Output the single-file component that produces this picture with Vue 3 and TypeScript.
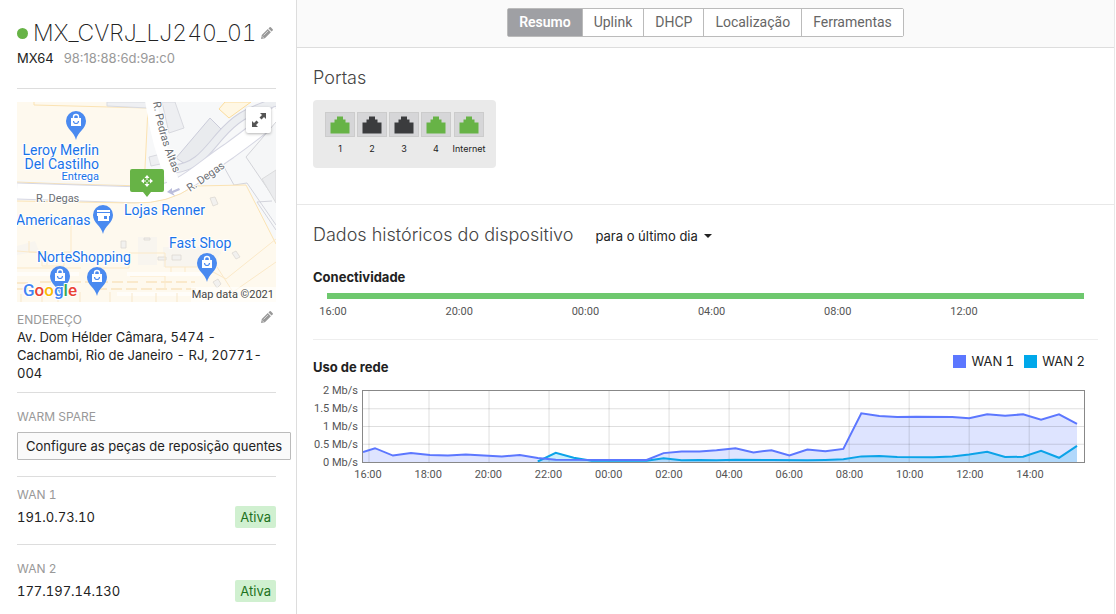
<script setup lang="ts">
interface Port {
  label: string
  up: boolean
}

interface Tick {
  label: string
  at: number
}

interface Uplink {
  name: string
  address: string
}

type Point = [number, number]

const tabs: string[] = ['Resumo', 'Uplink', 'DHCP', 'Localização', 'Ferramentas']
const activeTab = 'Resumo'

const ports: Port[] = [
  { label: '1', up: true },
  { label: '2', up: false },
  { label: '3', up: false },
  { label: '4', up: true },
  { label: 'Internet', up: true },
]

const uplinks: Uplink[] = [
  { name: 'WAN 1', address: '191.0.73.10' },
  { name: 'WAN 2', address: '177.197.14.130' },
]

const barWidth = 757
const barTicks: Tick[] = ['16:00', '20:00', '00:00', '04:00', '08:00', '12:00'].map((label, i) => ({
  label,
  at: 6 + i * 126.2,
}))

const plotWidth = 722
const plotHeight = 72
const plotTicks: Tick[] = [
  '16:00', '18:00', '20:00', '22:00', '00:00', '02:00',
  '04:00', '06:00', '08:00', '10:00', '12:00', '14:00',
].map((label, i) => ({ label, at: 6 + i * 60.1 }))

const levels: string[] = ['2 Mb/s', '1.5 Mb/s', '1 Mb/s', '0.5 Mb/s', '0 Mb/s']

const wan1: Point[] = [
  [0, 62], [12, 58], [30, 65.5], [48, 63], [67, 65], [85, 65.5], [103, 64.5], [139, 66.3],
  [157, 65], [175, 68], [193, 69.7], [284, 70], [301, 63], [319, 61.3], [337, 61.3],
  [354, 60], [373, 58], [391, 62.3], [409, 60], [427, 65.3], [445, 59.3], [463, 61],
  [481, 58.7], [499, 22.7], [517, 25.3], [535, 26.3], [554, 26], [590, 26.3], [607, 27.7],
  [625, 23.7], [643, 25], [661, 23.7], [679, 29], [697, 23.7], [715, 33.3],
]

const wan2: Point[] = [
  [175, 71.5], [193, 62.7], [211, 67.7], [229, 70.7], [284, 70.7], [301, 68.3], [319, 70.3],
  [337, 70], [354, 70.3], [373, 69.7], [409, 70], [445, 70.3], [463, 70], [481, 69.3],
  [499, 66.3], [517, 66], [535, 67], [571, 67.3], [590, 66.3], [607, 64.3], [625, 61.7],
  [643, 67], [661, 66.7], [679, 60.7], [697, 67.7], [715, 55.7],
]

const line = (points: Point[]): string => points.map((p) => p.join(',')).join(' ')

const area = (points: Point[]): string => {
  const first = points[0][0]
  const last = points[points.length - 1][0]
  return `${first},${plotHeight} ${line(points)} ${last},${plotHeight}`
}

const percent = (value: number, total: number): string => `${(value / total) * 100}%`
</script>

<template>
  <div class="page">
    <aside class="sidebar">
      <header class="device">
        <div class="device-title">
          <span class="status"></span>
          <h1>MX_CVRJ_LJ240_01</h1>
          <button class="edit" type="button" aria-label="Editar nome">
            <svg width="12" height="12" viewBox="0 0 12 12">
              <path fill="#999" d="M0 12l.8-3.900 6-6 3.100 3.100-6 6zM7.500 1.400L8.600.3q.6-.5 1.200 0l1.900 1.900q.5.6 0 1.200l-1.100 1.100z" />
              <path stroke="#fff" stroke-width=".6" fill="none" d="M2.600 8.400l4.500-4.500M1 9.300L2.700 11" />
            </svg>
          </button>
        </div>
        <p class="model"><span>MX64</span><span class="mac">98:18:88:6d:9a:c0</span></p>
      </header>

      <section class="block location">
        <div class="map">
          <svg class="map-art" viewBox="0 0 259 200" role="img" aria-label="Mapa">
            <defs>
              <g id="pin">
                <path d="M0 19C-1.500 11-10 8-10 0a10 10 0 0 1 20 0C10 8 1.500 11 0 19z" fill="#4a8af0" />
              </g>
              <g id="bag-pin">
                <use href="#pin" />
                <path d="M-5-3H5V5H-5z" fill="#fff" />
                <path d="M-2.500-3v-1a2.500 2.500 0 0 1 5 0v1" fill="none" stroke="#fff" stroke-width="1.400" />
                <path d="M-2.500 0a2.500 2.500 0 0 0 5 0" fill="none" stroke="#4a8af0" stroke-width="1.200" />
              </g>
              <path id="pedras" d="M136 0Q143 43 160 77" />
            </defs>
            <rect width="259" height="200" fill="#f7f8f9" />
            <path d="M0 0H132L128 83 0 78z" fill="#fef9ee" />
            <path d="M17 0V3L131 6 127 86M0 80L50 82 127 84" fill="none" stroke="#fbe3b3" />
            <path d="M90 0H131V6L90 4z" fill="#eff0f3" stroke="#d9dbe2" />
            <path d="M145 0H158L167 26 152 31z" fill="#eeeff2" stroke="#d8d9df" />
            <path d="M159 56L193 16 205 28 171 64z" fill="#e9ebee" stroke="#cbccda" />
            <path d="M132 55L148 51V61L134 64z" fill="#eeeff2" stroke="#d8d9df" />
            <path d="M208 0L202 7 212 16 234 0z" fill="#fff7e4" stroke="#fbdc9b" />
            <path d="M262-1C227 10 217 18 203 34S180 65 157 67" fill="none" stroke="#cfd0dd" stroke-width="9" />
            <path d="M262-1C227 10 217 18 203 34S180 65 157 67" fill="none" stroke="#eceef1" stroke-width="7" />
            <path d="M0 89Q60 91 125 93C165 92 181 69 212 49Q234 33 262 11" fill="none" stroke="#d6d7e3" stroke-width="17" />
            <path d="M0 89Q60 91 125 93C165 92 181 69 212 49Q234 33 262 11" fill="none" stroke="#fff" stroke-width="15" />
            <path d="M134-2Q140 43 157 82" fill="none" stroke="#fff" stroke-width="12" />
            <path d="M210 64L259 134V60L230 53z" fill="#f7f8f9" />
            <path d="M259 20L229 55 259 99" fill="#f5f6f7" stroke="#d2d3d8" />
            <path d="M259 68L245 77 259 101z" fill="#ebecee" stroke="#dadbdc" />
            <path d="M207 65L217 83 230 81 259 123" fill="none" stroke="#d3d4dc" />
            <path d="M0 99L117 101Q151 102 177 84L229 83 259 142V200H0z" fill="#fef9ee" />
            <path d="M0 99L117 101Q151 102 177 84L229 83 259 142" fill="none" stroke="#fbe3b3" />
            <path d="M255 99L240 100 259 128" fill="none" stroke="#d3d4dc" />
            <path d="M0 144L18 139 22 149 0 153zM121 135H140V163H121zM146 145H176Q190 145 196 138L204 151 194 165H146z" fill="#f8f5ef" />
            <path d="M104 139h5v7h-5zM141 155h8v3h-8zM155 153h9v5h-9zM127 136h6v2h-6zM193 96l3 8 5-2-3-7zM215 151l4-2 4 6-4 2zM196 180l5-3 3 5-4 4z" fill="#f2f1ef" stroke="#ddd9d3" stroke-width=".8" />
            <path d="M0 149L25 151V164H47V150H54V118M0 166H64M82 166H112V151H148V165H187L209 177 259 137M113 174H148V188M12 139V150H30V163M154 165V174M168 165V174M185 165L192 177M200 165L216 190 259 160" fill="none" stroke="#fbe9c8" />
            <path d="M0 181H14M23 180H74M80 180H123M129 180H178M0 187H60M79 187H179" fill="none" stroke="#fae9cb" stroke-width="2" stroke-dasharray="11 4" />
            <path d="M0 172H62M110 172H185M100 192H194" fill="none" stroke="#fffdf9" stroke-width="4" />
            <path d="M4 192V200M25 191V200M41 191V200M63 190V200M93 190V200M115 191V200M139 191V200M160 191V200" stroke="#f7e7ca" />
            <path d="M150 90L155 86 155 89 162 86 163 88 156 91 158 94z" fill="#bbbddb" />

            <g class="road">
              <text x="19" y="100">R. Degas</text>
              <text transform="translate(173 90) rotate(-35)">R. Degas</text>
              <text><textPath href="#pedras">R. Pedras Altas</textPath></text>
            </g>
            <use href="#bag-pin" x="59" y="19" />
            <use href="#pin" x="86" y="113" />
            <path d="M80 108H93V110H80zM80 111H93V114H92V119H81V114H80zM87 114V117H90V114z" fill="#fff" fill-rule="evenodd" />
            <use href="#bag-pin" x="190" y="161" />
            <use href="#bag-pin" x="43" y="174" />
            <use href="#bag-pin" x="80" y="175" />
            <g class="place">
              <text x="82" y="53" text-anchor="end">Leroy Merlin</text>
              <text x="82" y="67" text-anchor="end">Del Castilho</text>
              <text class="note" x="82" y="78" text-anchor="end">Entrega</text>
              <text x="-1" y="123">Americanas</text>
              <text x="107" y="113">Lojas Renner</text>
              <text x="20" y="160">NorteShopping</text>
              <text x="152" y="146">Fast Shop</text>
            </g>
            <path d="M115 67H145Q147 67 147 69V88Q147 90 145 90H134L130 95 126 90H115Q113 90 113 88V69Q113 67 115 67z" fill="#67b346" />
            <path d="M130 73l2.500 3h-5zM130 85l2.500-3h-5zM124 79l3-2.500v5zM136 79l-3-2.500v5z" fill="#fff" />
            <path d="M130 76v2M130 80v2M127 79h2M131 79h2" stroke="#fff" />
            <text class="google" x="6" y="194"><tspan fill="#4285f4">G</tspan><tspan fill="#ea4335">o</tspan><tspan fill="#fbbc05">o</tspan><tspan fill="#4285f4">g</tspan><tspan fill="#34a853">l</tspan><tspan fill="#ea4335">e</tspan></text>
            <rect x="174" y="185" width="85" height="15" fill="#fff" fill-opacity=".6" />
            <text class="credit" x="257" y="196" text-anchor="end">Map data ©2021</text>
          </svg>
          <button class="expand" type="button" aria-label="Ampliar mapa">
            <svg width="14" height="14" viewBox="0 0 14 14">
              <path fill="#555" d="M8 0H14V6L12 4 9.500 6.500 7.500 4.500 10 2zM6 14H0V8L2 10 4.500 7.500 6.500 9.500 4 12z" />
            </svg>
          </button>
        </div>
        <div class="label-row">
          <h2 class="caption">ENDEREÇO</h2>
          <button class="edit" type="button" aria-label="Editar endereço">
            <svg width="12" height="12" viewBox="0 0 12 12">
              <path fill="#999" d="M0 12l.8-3.900 6-6 3.100 3.100-6 6zM7.500 1.400L8.600.3q.6-.5 1.200 0l1.900 1.900q.5.6 0 1.200l-1.100 1.100z" />
              <path stroke="#fff" stroke-width=".6" fill="none" d="M2.600 8.400l4.500-4.500M1 9.300L2.700 11" />
            </svg>
          </button>
        </div>
        <address>Av. Dom Hélder Câmara, 5474 - Cachambi, Rio de Janeiro - RJ, 20771-004</address>
      </section>

      <section class="block spare">
        <h2 class="caption">WARM SPARE</h2>
        <button class="configure" type="button">Configure as peças de reposição quentes</button>
      </section>

      <section v-for="uplink in uplinks" :key="uplink.name" class="block uplink">
        <h2 class="caption">{{ uplink.name }}</h2>
        <div class="uplink-row">
          <span>{{ uplink.address }}</span>
          <span class="badge">Ativa</span>
        </div>
      </section>
    </aside>

    <main class="main">
      <nav class="topbar">
        <div class="tabs">
          <button
            v-for="tab in tabs"
            :key="tab"
            type="button"
            class="tab"
            :class="{ active: tab === activeTab }"
          >{{ tab }}</button>
        </div>
      </nav>

      <section class="ports">
        <h2 class="heading">Portas</h2>
        <ul class="port-panel">
          <li v-for="port in ports" :key="port.label">
            <span class="jack">
              <svg width="20" height="18" viewBox="0 0 20 18">
                <path :class="port.up ? 'up' : 'down'" d="M.5 17.500V6.500H4.500V3.500H7V.5H13V3.500H15.500V6.500H19.500V17.500z" />
              </svg>
            </span>
            <span class="port-label">{{ port.label }}</span>
          </li>
        </ul>
      </section>

      <section class="history">
        <div class="history-title">
          <h2 class="heading">Dados históricos do dispositivo</h2>
          <button class="period" type="button">para o último dia<span class="caret"></span></button>
        </div>

        <div class="connectivity">
          <h3>Conectividade</h3>
          <div class="bar"></div>
          <svg class="ticks">
            <text v-for="tick in barTicks" :key="tick.label" :x="percent(tick.at, barWidth)" y="16">{{ tick.label }}</text>
          </svg>
        </div>

        <div class="usage">
          <div class="usage-head">
            <h3>Uso de rede</h3>
            <ul class="legend">
              <li><span class="swatch first"></span>WAN 1</li>
              <li><span class="swatch second"></span>WAN 2</li>
            </ul>
          </div>
          <div class="chart">
            <div class="levels">
              <span v-for="level in levels" :key="level">{{ level }}</span>
            </div>
            <div class="plot-column">
              <svg class="plot" :viewBox="`0 0 ${plotWidth} ${plotHeight}`" preserveAspectRatio="none">
                <polygon :points="area(wan1)" fill="#5c77ff" fill-opacity=".2" />
                <polygon :points="area(wan2)" fill="#00a8ea" fill-opacity=".2" />
                <g class="grid">
                  <line v-for="tick in plotTicks" :key="tick.label" :x1="tick.at" :x2="tick.at" y1="0" :y2="plotHeight" />
                  <line v-for="n in 3" :key="n" x1="0" :x2="plotWidth" :y1="n * 18" :y2="n * 18" />
                </g>
                <polyline :points="line(wan2)" stroke="#0ba3e8" />
                <polyline :points="line(wan1)" stroke="#5c77ff" />
              </svg>
              <svg class="ticks">
                <text v-for="tick in plotTicks" :key="tick.label" :x="percent(tick.at, plotWidth)" y="15">{{ tick.label }}</text>
              </svg>
            </div>
          </div>
        </div>
      </section>
    </main>
  </div>
</template>

<style>
body {
  margin: 0;
  background: #fff;
}
</style>

<style scoped>
.page {
  display: flex;
  min-height: 100vh;
  box-sizing: border-box;
  font-family: Inter, "Liberation Sans", sans-serif;
  font-size: 13px;
  line-height: 18px;
  color: #222;
}

h1,
h2,
h3,
p,
ul {
  margin: 0;
  padding: 0;
  font-weight: 400;
}

ul {
  list-style: none;
}

button {
  font-family: inherit;
  cursor: pointer;
}

.sidebar {
  flex: 0 0 297px;
  min-width: 0;
  box-sizing: border-box;
  padding: 0 20px 0 17px;
  border-right: 1px solid #ddd;
  font-variant-numeric: tabular-nums;
}

.device {
  padding: 17px 0 21px;
}

.device-title {
  display: flex;
  align-items: center;
}

.status {
  width: 11px;
  height: 11px;
  margin-right: 5px;
  border-radius: 50%;
  background: #67b346;
}

h1 {
  flex: 1;
  font-size: 23px;
  line-height: 32px;
  font-weight: 200;
  white-space: nowrap;
}

.edit {
  display: flex;
  padding: 0;
  margin-right: 3px;
  border: 0;
  background: none;
}

.model {
  display: flex;
  gap: 10px;
  font-variant-numeric: normal;
}

.model .mac {
  color: #999;
}

.block {
  border-top: 1px solid #ddd;
}

.location {
  padding: 13px 0 10px;
}

.map {
  position: relative;
}

.map-art {
  display: block;
  width: 100%;
  font-family: Roboto, sans-serif;
}

.map-art text {
  paint-order: stroke;
  stroke: #fff;
  stroke-width: 2px;
  stroke-linejoin: round;
}

.map-art .place {
  font-size: 14px;
  fill: #1a73e8;
}

.map-art .note {
  font-size: 11px;
}

.map-art .road {
  font-size: 11px;
  fill: #6b6e73;
}

.map-art .google {
  font-size: 17px;
  font-weight: 500;
}

.map-art .credit {
  font-size: 11px;
  fill: #444;
  stroke: none;
}

.expand {
  position: absolute;
  top: 5px;
  right: 5px;
  display: grid;
  place-items: center;
  width: 25px;
  height: 26px;
  padding: 0;
  border: 0;
  border-radius: 2px;
  background: #fff;
  box-shadow: 0 1px 3px rgba(0, 0, 0, .3);
}

.label-row {
  display: flex;
  align-items: flex-start;
  justify-content: space-between;
  padding-top: 9px;
}

.caption {
  font-size: 12px;
  line-height: 17px;
  color: #999;
}

address {
  font-style: normal;
}

.spare {
  padding: 15px 0 16px;
}

.configure {
  display: block;
  height: 28px;
  margin-top: 7px;
  padding: 0 8px;
  border: 1px solid #bbb;
  border-radius: 1px;
  background: #fafafa;
  font-size: 13px;
  color: #222;
  white-space: nowrap;
}

.uplink {
  padding: 9px 0 16px;
}

.uplink + .uplink {
  padding-top: 15px;
}

.uplink-row {
  display: flex;
  align-items: center;
  justify-content: space-between;
  margin-top: 3px;
}

.badge {
  padding: 2px 5px;
  border-radius: 2px;
  background: #d0f0d0;
  color: #1d721d;
}

.main {
  flex: 1;
  min-width: 0;
  margin-right: 1px;
  border-right: 1px solid #e8e8e8;
}

.topbar {
  display: flex;
  justify-content: center;
  padding: 8px 0 10px;
  border-bottom: 1px solid #ddd;
  background: #fafafa;
}

.tabs {
  display: flex;
  border: 1px solid #bbb;
  border-radius: 2px;
  background: #fff;
}

.tab {
  padding: 0 11px;
  border: 0;
  border-right: 1px solid #bbb;
  background: #fff;
  font-family: Roboto, sans-serif;
  font-size: 14px;
  line-height: 27px;
  color: #666;
}

.tab:last-child {
  border-right: 0;
}

.tab.active {
  background: #9fa0a4;
  font-weight: 600;
  color: #fff;
}

.heading {
  font-size: 18px;
  line-height: 24px;
  font-weight: 300;
  color: #444;
}

.ports {
  padding: 18px 16px 36px;
  border-bottom: 1px solid #e8e8e8;
}

.port-panel {
  display: flex;
  gap: 2px;
  width: fit-content;
  height: 68px;
  margin-top: 10px;
  padding: 12px 12px 0;
  box-sizing: border-box;
  border-radius: 4px;
  background: #eaeaea;
}

.port-panel li {
  display: flex;
  flex-direction: column;
  align-items: center;
  width: 30px;
}

.port-panel li:last-child {
  margin-left: 1px;
}

.jack {
  display: grid;
  place-items: center;
  width: 28px;
  height: 23px;
  border: 1px solid #ccc;
  background: #d6d6d8;
}

.jack .up {
  fill: #67b346;
}

.jack .down {
  fill: #3b3c3e;
}

.port-label {
  margin-top: 3px;
  font-size: 9px;
  white-space: nowrap;
}

.history {
  padding: 18px 16px;
}

.history-title {
  display: flex;
  align-items: center;
  gap: 22px;
}

.period {
  display: flex;
  align-items: center;
  gap: 6px;
  padding: 2px 0 0;
  border: 0;
  background: none;
  font-size: 13px;
  color: #222;
}

.caret {
  border: 4px solid transparent;
  border-top-color: #222;
  border-bottom: 0;
}

h3 {
  font-size: 13px;
  line-height: 18px;
  font-weight: 700;
}

.connectivity {
  padding: 21px 14px 16px 0;
  border-bottom: 1px solid #eee;
}

.bar {
  height: 6px;
  margin: 7px 0 0 14px;
  background: #6ec86e;
}

.ticks {
  display: block;
  width: 100%;
  height: 24px;
  overflow: visible;
  font-family: Roboto, sans-serif;
  font-size: 11px;
  text-anchor: middle;
  fill: #555;
}

.connectivity .ticks {
  width: calc(100% - 14px);
  margin-left: 14px;
}

.usage {
  padding: 12px 13px 0 0;
}

.usage-head {
  display: flex;
  align-items: flex-start;
  justify-content: space-between;
}

.usage-head h3 {
  margin-top: 6px;
}

.legend {
  display: flex;
  gap: 10px;
  font-variant-numeric: tabular-nums;
}

.legend li {
  display: flex;
  align-items: center;
  gap: 5px;
}

.swatch {
  width: 13px;
  height: 13px;
}

.swatch.first {
  background: #5c77ff;
}

.swatch.second {
  background: #00a8ea;
}

.chart {
  display: flex;
  gap: 4px;
  margin-top: 6px;
}

.levels {
  display: flex;
  flex-direction: column;
  flex: 0 0 45px;
  text-align: right;
  font-family: Roboto, sans-serif;
  font-size: 11px;
  color: #555;
}

.plot-column {
  flex: 1;
  min-width: 0;
  padding-top: 8px;
}

.plot {
  display: block;
  box-sizing: border-box;
  width: 100%;
  height: 73px;
  border: 1px solid #888;
}

.plot polyline {
  fill: none;
  stroke-width: 2px;
  vector-effect: non-scaling-stroke;
}

.grid line {
  stroke: #000;
  stroke-opacity: .13;
  vector-effect: non-scaling-stroke;
}
</style>
